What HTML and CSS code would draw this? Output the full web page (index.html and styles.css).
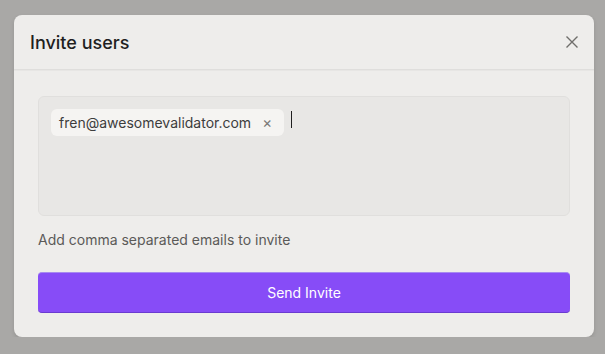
FILE: index.html
```html
<!DOCTYPE html>
<html lang="en">
<head>
    <meta charset="UTF-8">
    <meta name="viewport" content="width=device-width, initial-scale=1.0">
    <title>Invite users</title>
    <link rel="stylesheet" href="styles.css">
</head>
<body>

<div class="modal">
    <div class="modal-header">
        <h2>Invite users</h2>
        <button class="close-btn" aria-label="Close">
            <svg width="12" height="12" viewBox="0 0 12 12">
                <path d="M0.5 0.5 L11.5 11.5 M11.5 0.5 L0.5 11.5" stroke="#6f6e6b" stroke-width="1.4" fill="none"/>
            </svg>
        </button>
    </div>
    <div class="modal-body">
        <div class="email-box">
            <span class="chip">fren@awesomevalidator.com <span class="chip-remove">&times;</span></span>
            <span class="caret"></span>
        </div>
        <p class="help">Add comma separated emails to invite</p>
        <button class="send-btn">Send Invite</button>
    </div>
</div>

</body>
</html>
```

FILE: styles.css
```css
* {
    box-sizing: border-box;
}
body {
    font-family: Inter, "Noto Sans", sans-serif;
    background-color: #a9a8a6;
    margin: 0;
    padding: 15px 11px 0 14px;
}
.modal {
    width: 580px;
    height: 322px;
    background-color: #eeedeb;
    border-radius: 8px;
    box-shadow: 0 2px 4px rgba(0, 0, 0, 0.12);
    overflow: hidden;
}
.modal-header {
    height: 55px;
    display: flex;
    align-items: center;
    justify-content: space-between;
    padding: 0 16px;
    border-bottom: 1px solid #dfdedc;
    box-shadow: 0 1px 0 #e7e6e4;
}
.modal-header h2 {
    margin: 0;
    font-size: 18px;
    font-weight: 500;
    color: #1f1f1f;
}
.close-btn {
    background: none;
    border: none;
    padding: 0;
    width: 12px;
    height: 12px;
    display: flex;
    cursor: pointer;
}
.modal-body {
    padding: 26px 24px 0;
}
.email-box {
    height: 120px;
    background-color: #e8e7e5;
    border: 1px solid #e0dfdd;
    border-radius: 6px;
    padding: 12px;
    display: flex;
    align-items: flex-start;
    gap: 7px;
}
.chip {
    display: inline-flex;
    align-items: center;
    height: 27px;
    padding: 0 12px 0 8px;
    background-color: #f5f4f2;
    border-radius: 6px;
    font-size: 14px;
    color: #3d3d3d;
}
.chip-remove {
    margin-left: 11px;
    color: #7a7977;
    font-size: 15px;
}
.caret {
    width: 1px;
    height: 17px;
    margin-top: 2px;
    background-color: #1f1f1f;
}
.help {
    margin: 15px 0 0;
    font-size: 14px;
    color: #5b5a58;
    line-height: 17px;
}
.send-btn {
    display: block;
    width: 100%;
    height: 41px;
    margin-top: 24px;
    background-color: #874cf7;
    color: #ffffff;
    border: none;
    border-top: 1px solid #a78af0;
    border-bottom: 1px solid #6a3bd0;
    border-radius: 4px;
    font-family: inherit;
    font-size: 14px;
    cursor: pointer;
}
```
